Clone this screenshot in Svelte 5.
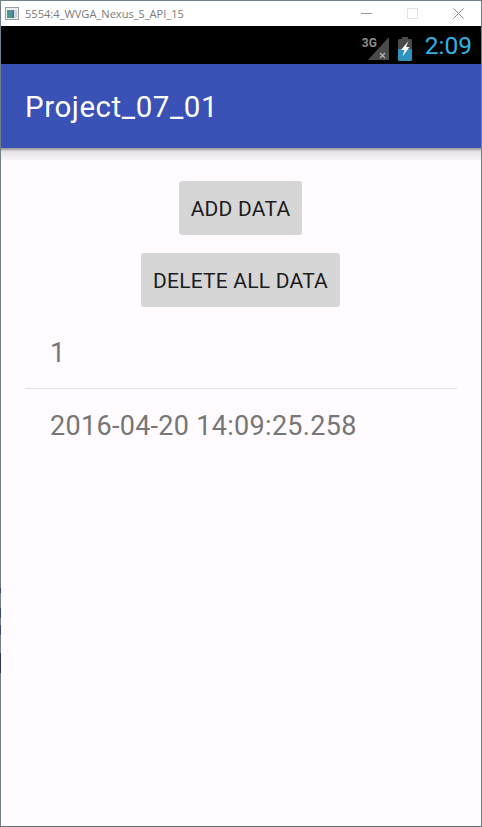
<script>
  const buttons = ["ADD DATA", "DELETE ALL DATA"];
  const rows = ["1", "2016-04-20 14:09:25.258"];
</script>

<div class="window">
  <header class="titlebar">
    <svg class="app-icon" width="14" height="13" viewBox="0 0 14 13" aria-hidden="true">
      <rect x="0.5" y="0.5" width="13" height="12" fill="#eef0f0" stroke="#9aa0a3" />
      <rect x="2" y="3" width="5" height="8" fill="#4a9a8c" />
      <rect x="7" y="3" width="2" height="8" fill="#4f76a3" />
      <rect x="9" y="3" width="3" height="8" fill="#cfd4d6" />
    </svg>
    <span class="title">5554:4_WVGA_Nexus_S_API_15</span>
    <div class="controls">
      <svg width="11" height="11" viewBox="0 0 11 11" aria-hidden="true"><path d="M0 5.5h11" stroke="#999" /></svg>
      <svg width="11" height="11" viewBox="0 0 11 11" aria-hidden="true"><rect x="0.5" y="0.5" width="10" height="10" fill="none" stroke="#e3e3e3" /></svg>
      <svg width="11" height="11" viewBox="0 0 11 11" aria-hidden="true"><path d="M0.5 0.5l10 10M10.5 0.5l-10 10" stroke="#8a8a8a" /></svg>
    </div>
  </header>

  <div class="screen">
    <div class="statusbar">
      <div class="signal">
        <svg width="21" height="23" viewBox="0 0 21 23" aria-hidden="true">
          <path d="M21 0V23H0Z" fill="#4a4a4a" />
          <path d="M12 16l5 5M17 16l-5 5" stroke="#b4b4b4" stroke-width="1.3" />
        </svg>
        <span class="net">3G</span>
      </div>
      <svg class="battery" width="14" height="24" viewBox="0 0 14 24" aria-hidden="true">
        <path d="M4 0h6v2h3l1 1v20l-1 1H1l-1-1V3l1-1h3Z" fill="#4b4b4b" />
        <path d="M0 12h14v11l-1 1H1l-1-1Z" fill="#2e93bd" />
        <path d="M10.500 4L3 13h3.500L4.500 19.500 11.500 10H8Z" fill="#fff" />
      </svg>
      <span class="clock">2:09</span>
    </div>

    <div class="appbar"><h1>Project_07_01</h1></div>

    <main class="content">
      <div class="actions">
        {#each buttons as label}
          <button type="button">{label}</button>
        {/each}
      </div>
      <ul>
        {#each rows as row}
          <li>{row}</li>
        {/each}
      </ul>
    </main>
  </div>
</div>

<style>
  :global(body) { background: #fff; }
  .window {
    position: relative;
    display: flex;
    flex-direction: column;
    box-sizing: border-box;
    width: 482px;
    height: 827px;
    border: 1px solid #6f8088;
    border-bottom-color: #5f7078;
    font-family: Roboto, sans-serif;
  }
  /* desktop showing through the left edge of the frame */
  .window::before {
    content: "";
    position: absolute;
    top: 586px;
    left: -1px;
    width: 1px;
    height: 86px;
    background: linear-gradient(
      transparent 0 1px, #3a4a6a 1px 6px, transparent 6px 21px, #3a4a6a 21px 31px,
      transparent 31px 38px, #3a4a6a 38px 48px, transparent 48px 66px, #2f3a58 66px 86px
    );
  }
  .titlebar {
    display: flex;
    align-items: center;
    flex: 0 0 25px;
    padding-left: 4px;
    background: #fff;
  }
  .app-icon { margin-right: 6px; }
  .title {
    color: #7a7a7a;
    font-family: "Open Sans", sans-serif;
    font-size: 11.1px;
  }
  .controls {
    display: flex;
    gap: 35px;
    align-items: center;
    margin-left: auto;
    margin-right: 17px;
  }
  .screen { display: flex; flex: 1; flex-direction: column; min-height: 0; }
  .statusbar {
    display: flex;
    align-items: center;
    justify-content: flex-end;
    flex: 0 0 38px;
    padding-right: 9px;
    background: #000;
  }
  .signal { position: relative; display: flex; margin-right: 9px; margin-top: 6px; }
  .net {
    position: absolute;
    top: -1px;
    left: -6px;
    color: #8e8e8e;
    font-size: 12px;
    font-weight: 700;
  }
  .battery { margin-right: 13px; margin-top: 7px; }
  .clock { color: #2fb3e6; font-size: 24.5px; }
  .appbar {
    position: relative;
    display: flex;
    align-items: center;
    flex: 0 0 84px;
    padding-left: 24px;
    background: #3a51b5;
  }
  .appbar::after {
    content: "";
    position: absolute;
    top: 100%;
    left: 0;
    right: 0;
    height: 12px;
    background: linear-gradient(rgba(0, 0, 0, 0.42), rgba(0, 0, 0, 0.1) 30%, rgba(0, 0, 0, 0.03));
  }
  h1 {
    margin: 2px 0 0;
    color: #fff;
    font-size: 29.5px;
    font-weight: 400;
    letter-spacing: 0.55px;
  }
  .content { flex: 1; padding: 33px 24px 0; background: #fffbff; }
  .actions {
    display: flex;
    flex-direction: column;
    align-items: center;
    gap: 18px;
    margin-right: 1px;
  }
  button {
    height: 54px;
    padding: 2px 12px 0;
    border: 0;
    border-radius: 3px;
    background: #d6d6d6;
    color: #1c1c1c;
    font-family: inherit;
    font-size: 21px;
    letter-spacing: 0.22px;
  }
  ul { margin: 9px 0 0; padding: 0; list-style: none; }
  li {
    height: 72px;
    padding-left: 25px;
    color: #767676;
    font-size: 27px;
    letter-spacing: 0.3px;
    line-height: 74px;
  }
  li:first-child { border-bottom: 1px solid #e2dee2; }
</style>
